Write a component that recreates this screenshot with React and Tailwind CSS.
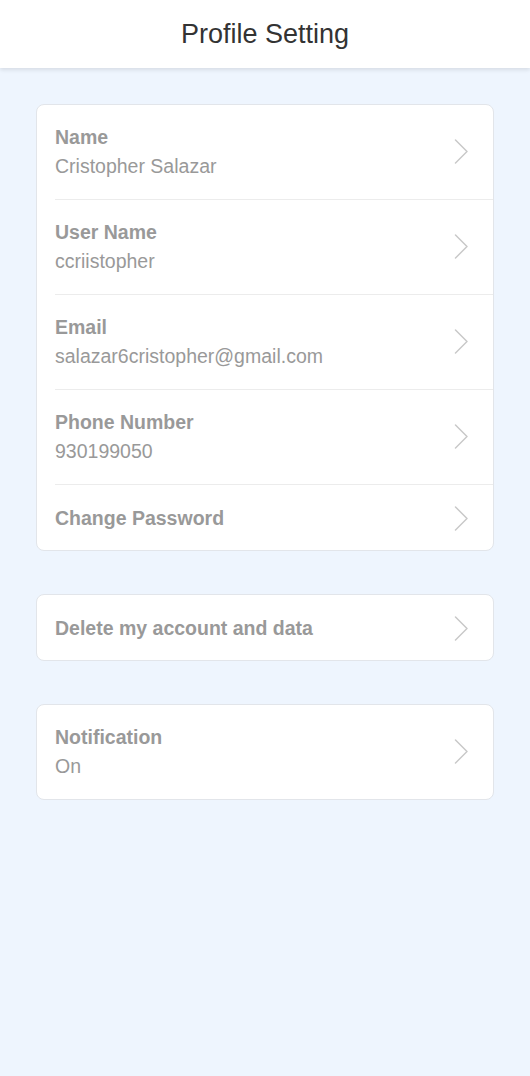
import { ChevronRight } from "lucide-react";

const accountRows = [
  { label: "Name", value: "Cristopher Salazar" },
  { label: "User Name", value: "ccriistopher" },
  { label: "Email", value: "salazar6cristopher@gmail.com" },
  { label: "Phone Number", value: "930199050" },
  { label: "Change Password" },
];

function Chevron() {
  return (
    <svg
      width="15"
      height="25"
      viewBox="0 0 15 25"
      fill="none"
      className="shrink-0"
    >
      <path
        d="M1.5 1 L13 12.5 L1.5 24"
        stroke="#c9c9c9"
        strokeWidth="1.5"
        strokeLinecap="round"
        strokeLinejoin="round"
      />
    </svg>
  );
}

function SettingRow({ label, value, last }) {
  return (
    <div className="relative">
      <button
        type="button"
        className={`flex w-full items-center justify-between pl-[18px] pr-[24px] text-left ${
          value ? "pt-[19px] pb-[20px]" : "pt-[20px] pb-[19px]"
        }`}
      >
        <div>
          <p className="text-[19.5px] font-bold leading-[26px] text-[#999999]">
            {label}
          </p>
          {value && (
            <p className="mt-[3px] text-[19.5px] leading-[26px] text-[#999999]">
              {value}
            </p>
          )}
        </div>
        <Chevron />
      </button>
      {!last && <div className="ml-[18px] h-px bg-[#ececec]" />}
    </div>
  );
}

function Card({ rows }) {
  return (
    <div className="overflow-hidden rounded-[8px] border border-[#e2e5ea] bg-white">
      {rows.map((row, i) => (
        <SettingRow key={row.label} {...row} last={i === rows.length - 1} />
      ))}
    </div>
  );
}

export default function App() {
  return (
    <div
      className="min-h-[1076px] bg-[#eef5fe]"
      style={{ fontFamily: '"Liberation Sans", Arial, sans-serif' }}
    >
      <header className="relative z-10 flex h-[68px] items-center justify-center bg-white shadow-[0_2px_4px_rgba(0,0,0,0.1)]">
        <h1 className="text-[27px] leading-none text-[#333333]">
          Profile Setting
        </h1>
      </header>

      <main className="flex flex-col gap-[43px] px-[36px] pt-[36px]">
        <Card rows={accountRows} />
        <Card rows={[{ label: "Delete my account and data" }]} />
        <Card rows={[{ label: "Notification", value: "On" }]} />
      </main>
    </div>
  );
}
